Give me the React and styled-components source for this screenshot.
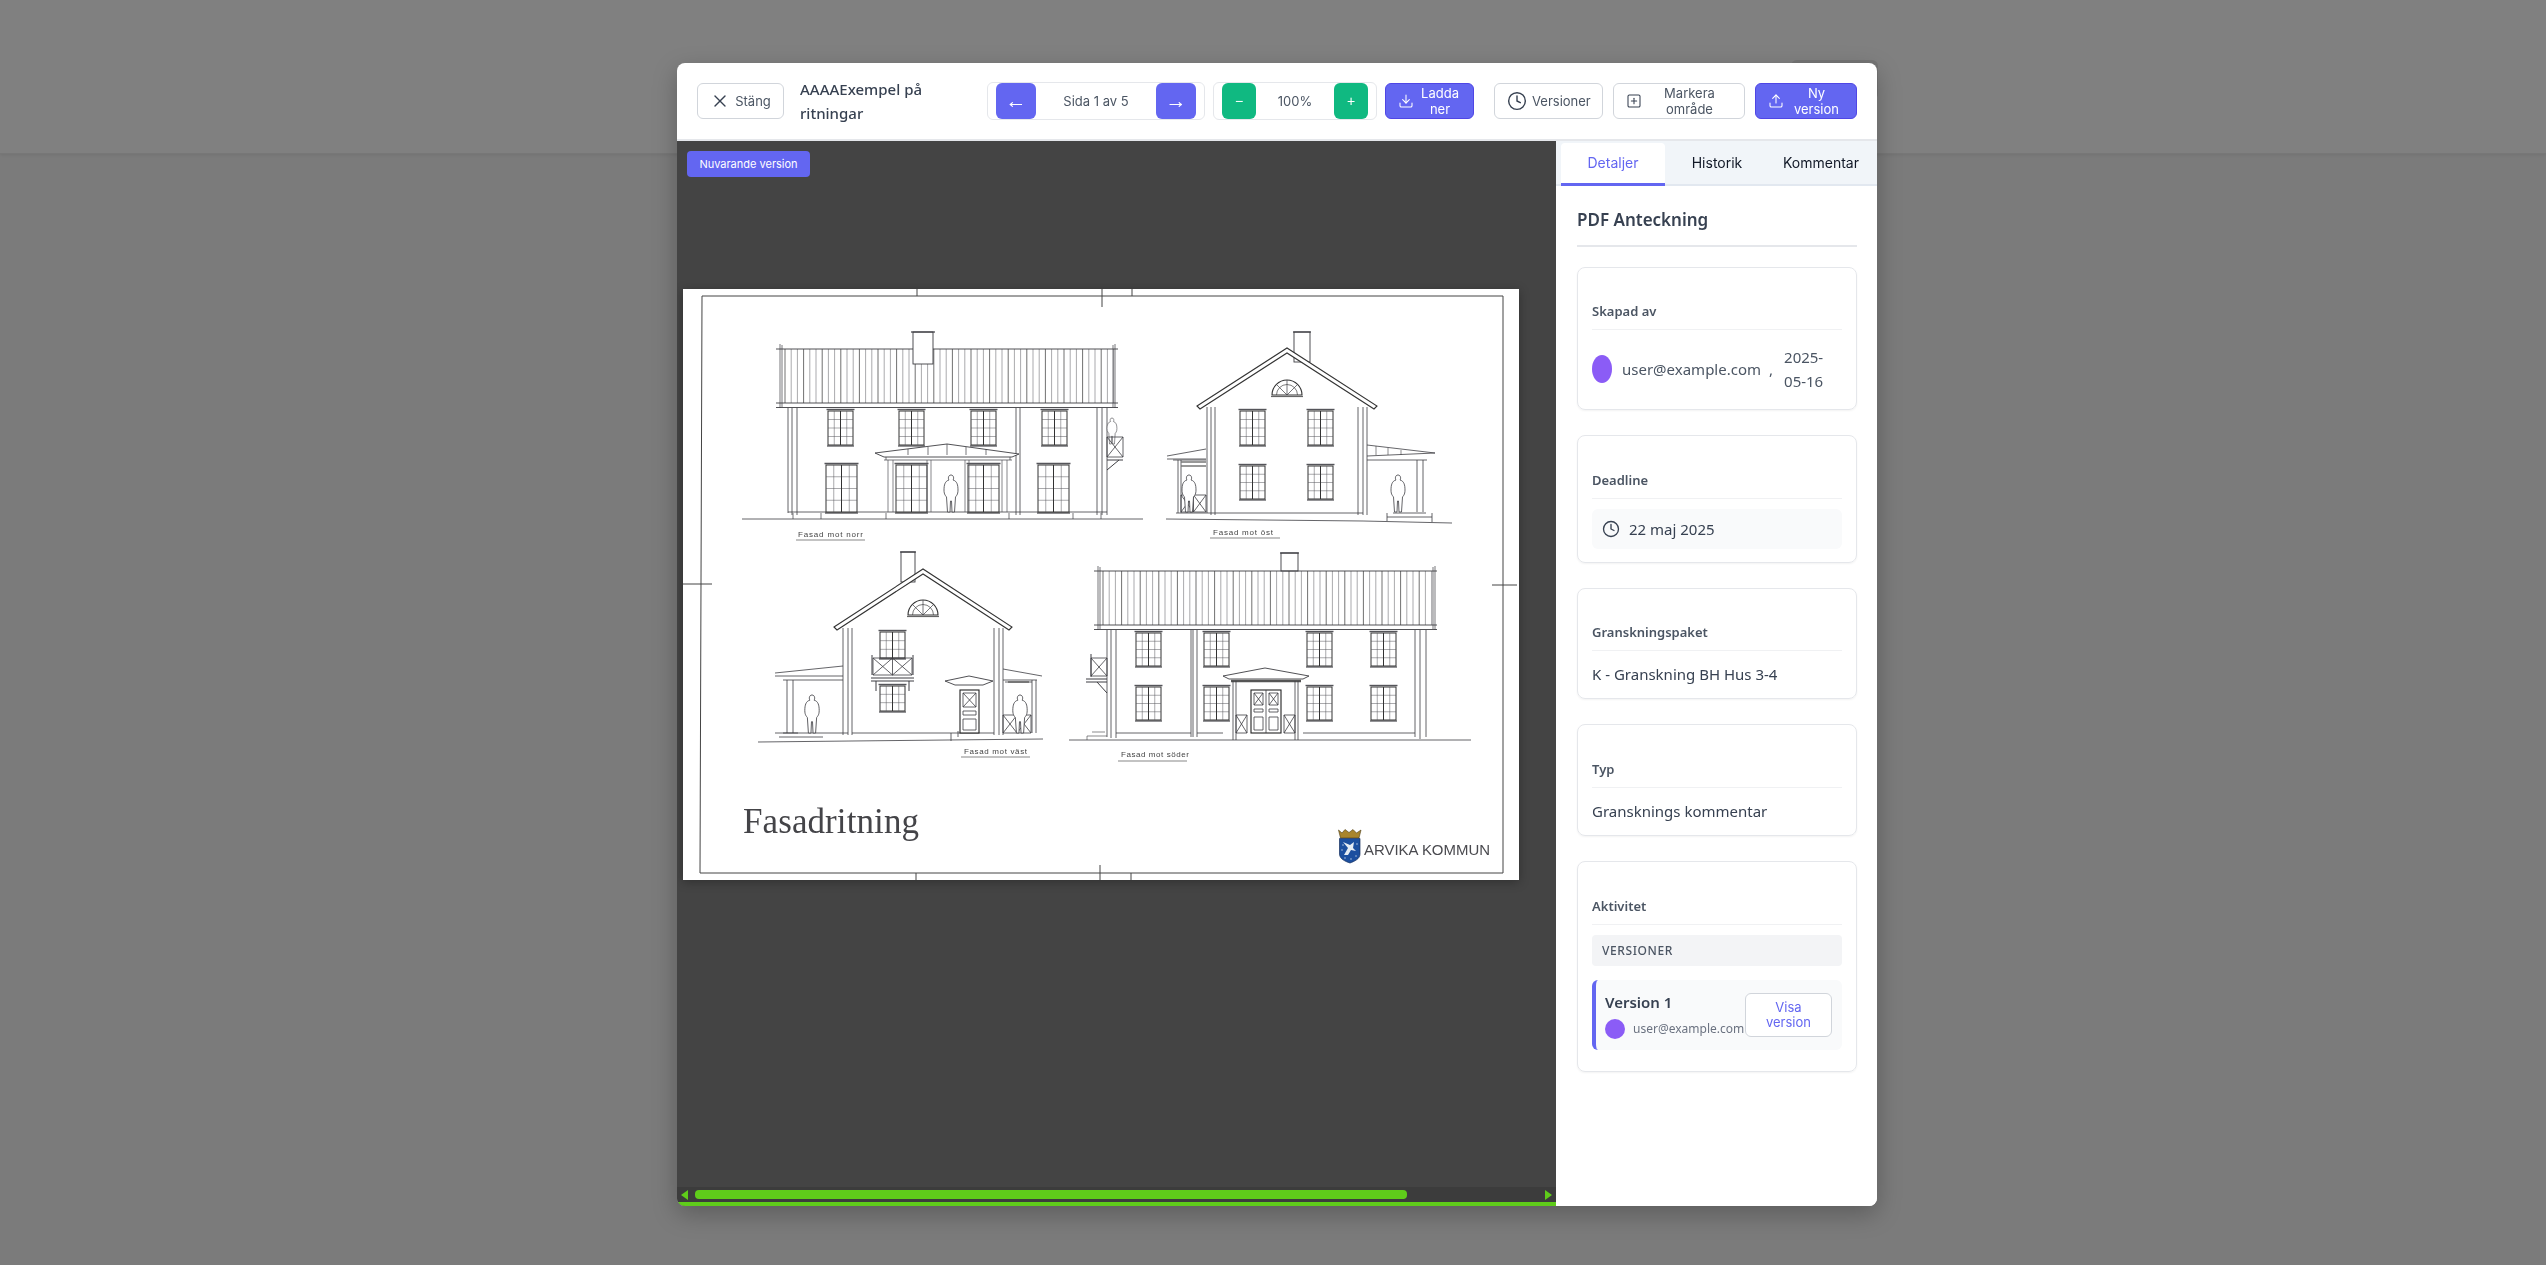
import React from 'react';
import styled, { createGlobalStyle } from 'styled-components';
import { X, Download, Clock, SquarePlus, Upload } from 'lucide-react';

const GlobalStyle = createGlobalStyle`
    html, body {
        margin: 0;
        height: 100%;
        background: #808080;
        overflow: hidden;
        font-family: "Inter", "Liberation Sans", sans-serif;
    }
`;

const PageBehind = styled.div`
    height: 1265px;
    display: flex;
    flex-direction: column;
    background: #7b7b7b;
`;

const TopBehind = styled.div`
    height: 154px;
    flex-shrink: 0;
    padding: 60px 0 0 1791px;
    box-sizing: border-box;
    background: #808080;
    border-bottom: 1px solid #777;
    box-shadow: 0 1px 3px rgba(0, 0, 0, 0.08);
`;

const GhostButton = styled.div`
    width: 87px;
    height: 40px;
    border-radius: 6px;
    background: #757575;
`;

const Modal = styled.div`
    position: fixed;
    top: 63px;
    left: 677px;
    width: 1200px;
    height: 1143px;
    display: flex;
    flex-direction: column;
    background: #fff;
    border-radius: 8px;
    overflow: hidden;
    box-shadow: 0 8px 24px rgba(0, 0, 0, 0.25);
`;

const Toolbar = styled.header`
    height: 76px;
    flex-shrink: 0;
    display: flex;
    align-items: center;
    padding: 0 20px;
    border-bottom: 2px solid #e5e7eb;
`;

const Button = styled.button`
    width: ${(p) => p.$w}px;
    height: 36px;
    flex-shrink: 0;
    margin-left: ${(p) => p.$ml || 0}px;
    display: flex;
    align-items: center;
    gap: 5px;
    padding: 0 12px;
    box-sizing: border-box;
    border-radius: 6px;
    border: 1px solid ${(p) => (p.$primary ? '#4f46e5' : '#d1d5db')};
    background: ${(p) => (p.$primary ? '#6366f1' : '#fff')};
    color: ${(p) => (p.$primary ? '#fff' : '#4b5563')};
    font: 13px/16px "Inter", sans-serif;
    text-align: center;

    svg {
        flex-shrink: 0;
        color: ${(p) => (p.$primary ? '#fff' : '#374151')};
    }

    span {
        flex: 1;
    }
`;

const Title = styled.div`
    width: 176px;
    margin-left: 16px;
    flex-shrink: 0;
    box-sizing: border-box;
    font: 500 15px/24px "Noto Sans", sans-serif;
    color: #374151;
`;

const ControlGroup = styled.div`
    width: ${(p) => p.$w}px;
    height: 38px;
    margin-left: ${(p) => p.$ml}px;
    flex-shrink: 0;
    display: flex;
    align-items: center;
    justify-content: space-between;
    padding: 0 8px;
    box-sizing: border-box;
    border: 1px solid #e5e7eb;
    border-radius: 6px;
    font-size: 13px;
    color: #4b5563;
`;

const SquareButton = styled.button`
    width: ${(p) => p.$w}px;
    height: 36px;
    padding: 0;
    border: none;
    border-radius: 6px;
    background: ${(p) => p.$bg};
    color: #fff;
    font: ${(p) => p.$fs}px/36px "Liberation Sans", sans-serif;
`;

const Body = styled.div`
    flex: 1;
    min-height: 0;
    display: flex;
`;

const Viewer = styled.main`
    position: relative;
    width: 879px;
    flex-shrink: 0;
    display: flex;
    flex-direction: column;
    background: #444;
`;

const Badge = styled.div`
    position: absolute;
    top: 10px;
    left: 10px;
    height: 26px;
    width: 123px;
    border-radius: 4px;
    background: #6366f1;
    color: #fff;
    font: 11px/26px "Inter", sans-serif;
    text-align: center;
`;

const Stage = styled.div`
    flex: 1;
    padding: 148px 0 0 6px;
`;

const Sheet = styled.div`
    width: 836px;
    height: 591px;
    background: #fff;
    box-shadow: 0 2px 10px rgba(0, 0, 0, 0.3);

    svg {
        display: block;
        filter: blur(0.3px);
    }
`;

const ScrollTrack = styled.div`
    height: 15px;
    flex-shrink: 0;
    display: flex;
    align-items: center;
    padding: 0 4px;
    background: #3c3c3c;
`;

const ScrollArrow = styled.div`
    width: 0;
    height: 0;
    border-top: 5px solid transparent;
    border-bottom: 5px solid transparent;
    border-${(p) => (p.$right ? 'left' : 'right')}: 7px solid #5fcc1a;
    margin-left: ${(p) => (p.$right ? 'auto' : '0')};
`;

const ScrollThumb = styled.div`
    width: 712px;
    height: 9px;
    margin-left: 7px;
    border-radius: 4px;
    background: #5fcc1a;
`;

const GreenEdge = styled.div`
    height: 4px;
    flex-shrink: 0;
    background: #5fcc1a;
`;

const Sidebar = styled.aside`
    flex: 1;
    min-width: 0;
    display: flex;
    flex-direction: column;
    background: #fff;
`;

const TabBar = styled.nav`
    height: 45px;
    flex-shrink: 0;
    display: flex;
    padding: 2px 0 0 5px;
    box-sizing: border-box;
    background: #f1f5f9;
    border-bottom: 2px solid #e2e8f0;
`;

const Tab = styled.div`
    width: 104px;
    height: 43px;
    padding-bottom: 3px;
    box-sizing: border-box;
    border-radius: 4px 4px 0 0;
    background: ${(p) => (p.$active ? '#fff' : 'transparent')};
    border-bottom: 3px solid ${(p) => (p.$active ? '#6366f1' : 'transparent')};
    color: ${(p) => (p.$active ? '#6366f1' : '#111827')};
    font: 14px/40px "Inter", sans-serif;
    text-align: center;
`;

const Details = styled.div`
    padding: 0 20px 0 21px;
    display: flex;
    flex-direction: column;
    font-family: "Noto Sans", sans-serif;
`;

const Heading = styled.h2`
    margin: 21px 0 20px;
    padding-bottom: 12px;
    border-bottom: 2px solid #e5e7eb;
    font: 600 17px/26px "Noto Sans", sans-serif;
    color: #374151;
`;

const Card = styled.section`
    margin-bottom: 25px;
    padding: ${(p) => p.$pt || 33}px 14px ${(p) => p.$pb || 12}px;
    border: 1px solid #e5e7eb;
    border-radius: 8px;
    box-shadow: 0 1px 2px rgba(0, 0, 0, 0.05);
`;

const Label = styled.h3`
    margin: 0 0 10px;
    padding-bottom: 8px;
    border-bottom: 1px solid #f0f1f3;
    font: 600 13px/20px "Noto Sans", sans-serif;
    color: #4b5563;
`;

const Value = styled.div`
    margin-top: 11px;
    font-size: 15px;
    line-height: 24px;
    color: #374151;
`;

const UserRow = styled.div`
    display: flex;
    align-items: center;
    margin-top: 15px;
    font-size: 15px;
    line-height: 24px;
    color: #4b5563;
`;

const Avatar = styled.div`
    width: 20px;
    height: ${(p) => p.$h || 20}px;
    flex-shrink: 0;
    border-radius: 50%;
    background: #8b5cf6;
    margin-right: ${(p) => p.$mr}px;
`;

const Comma = styled.span`
    margin: 0 11px 0 8px;
`;

const DateText = styled.span`
    width: 50px;
`;

const DeadlineBox = styled.div`
    height: 40px;
    display: flex;
    align-items: center;
    gap: 9px;
    padding: 0 10px;
    border-radius: 6px;
    background: #f9fafb;
    font-size: 15px;
    color: #374151;

    svg {
        color: #374151;
    }
`;

const SectionTag = styled.div`
    height: 31px;
    padding-left: 10px;
    border-radius: 4px;
    background: #f3f4f6;
    font: 500 12px/31px "Noto Sans", sans-serif;
    letter-spacing: 0.6px;
    color: #4b5563;
`;

const VersionItem = styled.div`
    height: 70px;
    margin: 14px 0 9px;
    display: flex;
    align-items: center;
    justify-content: space-between;
    padding: 0 10px 0 9px;
    box-sizing: border-box;
    border-left: 4px solid #6366f1;
    border-radius: 6px;
    background: #f9fafb;
`;

const VersionInfo = styled.div`
    min-width: 0;
    width: 140px;
    flex-shrink: 0;
`;

const VersionName = styled.div`
    font: 600 15px/22px "Noto Sans", sans-serif;
    color: #374151;
`;

const VersionUser = styled.div`
    display: flex;
    align-items: center;
    margin-top: 6px;
    font-size: 12px;
    line-height: 20px;
    color: #6b7280;
`;

const ViewButton = styled.button`
    width: 87px;
    height: 44px;
    flex-shrink: 0;
    padding: 0 12px;
    border: 1px solid #d1d5db;
    border-radius: 6px;
    background: #fff;
    color: #6366f1;
    font: 13px/15px "Inter", sans-serif;
`;

const INK = '#3d3d42';

const Line = ({ d, w = 0.8, c = INK }) => <path d={d} fill="none" stroke={c} strokeWidth={w} />;

const Win = ({ x, y, w, h, cols = 4, rows = 4 }) => {
    const grid = [];
    for (let i = 1; i < cols; i++) {
        const gx = x + (w * i) / cols;
        grid.push(`M${gx} ${y}V${y + h}`);
    }
    for (let i = 1; i < rows; i++) {
        const gy = y + (h * i) / rows;
        grid.push(`M${x} ${gy}H${x + w}`);
    }
    return (
        <g>
            <Line d={`M${x - 1.5} ${y - 1.5}H${x + w + 1.5}`} w={1.4} c="#55555a" />
            <Line d={`M${x - 1} ${y + h + 1}H${x + w + 1}`} w={1.4} c="#66666a" />
            <rect x={x} y={y} width={w} height={h} fill="#fff" stroke="#333" strokeWidth={1} />
            <Line d={grid.join('')} w={0.5} c="#55555a" />
            <Line d={`M${x + w / 2} ${y}V${y + h}`} w={1} c="#333" />
        </g>
    );
};

const Person = ({ x, y, h }) => (
    <g transform={`translate(${x} ${y}) scale(${h / 37})`}>
        <path
            d="M0 0C-3 0-3 4-2 5C-6 6-7 10-7 15C-7 20-5 21-4.5 22L-3.5 37L-1 37L-.5 26L.5 26L1 37L3.5 37L4.5 22C5 21 7 20 7 15C7 10 6 6 2 5C3 4 3 0 0 0Z"
            fill="#fff"
            stroke={INK}
            strokeWidth={0.8}
        />
    </g>
);

const Rail = ({ x, y, w, h, n = 1 }) => {
    const cell = w / n;
    let d = `M${x} ${y}H${x + w}M${x} ${y + h}H${x + w}`;
    for (let i = 0; i < n; i++) {
        const a = x + cell * i;
        d += `M${a} ${y}L${a + cell} ${y + h}M${a + cell} ${y}L${a} ${y + h}M${a} ${y}V${y + h}`;
    }
    d += `M${x + w} ${y}V${y + h}`;
    return <Line d={d} w={0.8} />;
};

const Roof = ({ x1, x2, top, bottom, left, right }) => {
    const stripes = [];
    for (let x = x1 + 5, i = 0; x < x2; x += 6.2, i++) {
        stripes.push(<Line key={x} d={`M${x} ${top}V${bottom}`} w={0.7} c={i % 3 === 0 ? '#333' : '#85858a'} />);
    }
    return (
        <g>
            {stripes}
            <Line d={`M${left} ${top}H${right}`} w={0.9} />
            <Line d={`M${x1} ${top - 5}V${bottom + 5}M${x1 + 2} ${top - 4}V${bottom + 4}M${x2} ${top - 5}V${bottom + 5}M${x2 - 2} ${top - 4}V${bottom + 4}`} w={0.7} />
            <Line d={`M${left} ${bottom}H${right}M${left} ${bottom + 4.5}H${right}`} w={0.9} />
        </g>
    );
};

const Gable = ({ ax, ay, lx, rx, ey }) => (
    <g>
        <path d={`M${lx} ${ey}L${ax} ${ay}L${rx} ${ey}L${rx - 3} ${ey + 3}L${ax} ${ay + 5}L${lx + 3} ${ey + 3}Z`} fill="#fff" stroke="#333" strokeWidth={1.1} />
    </g>
);

const Lunette = ({ x, y, r }) => (
    <g>
        <path d={`M${x - r} ${y}A${r} ${r} 0 0 1 ${x + r} ${y}Z`} fill="#fff" stroke="#333" strokeWidth={1.1} />
        <path d={`M${x - r * 0.7} ${y}A${r * 0.7} ${r * 0.7} 0 0 1 ${x + r * 0.7} ${y}`} fill="none" stroke="#444" strokeWidth={0.7} />
        <Line d={`M${x} ${y}V${y - r}M${x} ${y}L${x - r * 0.7} ${y - r * 0.7}M${x} ${y}L${x + r * 0.7} ${y - r * 0.7}`} w={0.7} />
        <Line d={`M${x - r - 1} ${y + 1.5}H${x + r + 1}`} w={1.2} c="#666" />
    </g>
);

const Caption = ({ x, y, text, ux1, ux2, uy, len }) => (
    <g>
        <text x={x} y={y} fontFamily="Liberation Sans, sans-serif" fontSize="8" fill="#444" textLength={len}>
            {text}
        </text>
        <Line d={`M${ux1} ${uy}H${ux2}`} w={0.7} c="#555" />
    </g>
);

const NorthFacade = () => (
    <g>
        <Roof x1={97} x2={432} top={60} bottom={114} left={93} right={435} />
        <rect x={230} y={43} width={20} height={32} fill="#fff" stroke={INK} strokeWidth={0.9} />
        <Line d="M228 43H252" w={1.2} />
        <Line d="M105 119V224M109 119V226M114 119V226M414 119V226M419 119V226M424 119V226M333 119V226M337 119V226" />
        <Line d="M59 230H460M105 223H424" />
        <Line d="M110 224V230M138 224V230M203 224V230M326 224V230M390 224V230M418 224V230" w={0.7} />
        {[145, 216, 288, 359].map((x) => (
            <Win key={x} x={x} y={122} w={25} h={34} />
        ))}
        {[143, 213, 285, 355].map((x) => (
            <Win key={x} x={x} y={176} w={31} h={47} />
        ))}
        <path d="M192 164L264 155L336 165L329 168H201Z" fill="#fff" stroke={INK} strokeWidth={0.9} />
        <Line d="M201 171H329M203 168V171M327 168V171M225 160V166M245 158V166M264 155V166M283 158V166M303 160V166" w={0.7} />
        <Line d="M205 171V223M210 171V223M244 171V223M248 171V223M282 171V223M286 171V223M319 171V223M324 171V223" w={0.7} c="#55555a" />
        <Person x={268} y={186} h={37} />
        <Person x={429} y={129} h={26} />
        <Rail x={424} y={148} w={16} h={20} />
        <Line d="M424 171H440M424 181L436 171" w={1} />
        <Caption x={115} y={248} text="Fasad mot norr" len={65} ux1={113} ux2={182} uy={251} />
    </g>
);

const EastFacade = () => (
    <g>
        <rect x={611} y={43} width={16} height={30} fill="#fff" stroke={INK} strokeWidth={0.9} />
        <Line d="M610 43H628" w={1.2} />
        <Gable ax={604} ay={59} lx={514} rx={694} ey={117} />
        <Line d="M524 118V224M528 118V226M532 118V226M675 118V226M680 118V226M684 118V226" />
        <Line d="M493 224H680M483 230L680 232L769 234" />
        <Lunette x={604} y={106} r={15} />
        {[557, 625].map((x) => (
            <g key={x}>
                <Win x={x} y={122} w={25} h={34} />
                <Win x={x} y={177} w={25} h={33} />
            </g>
        ))}
        <Line d="M484 167L523 160M484 170H523M490 171H523M495 171V224M498 171V224" w={0.8} />
        <Line d="M498 173H523M498 177H523" w={1.4} c="#777" />
        <Rail x={498} y={206} w={25} h={17} n={2} />
        <Person x={506} y={186} h={37} />
        <Line d="M684 156L752 164L684 167M684 171H744M734 171V223M740 171V223M704 224V232M704 228H749M749 224V233M710 224H743" w={0.8} />
        <Line d="M693 157V166M705 159V166M718 161V166" w={0.6} />
        <Person x={715} y={186} h={37} />
        <Caption x={530} y={246} text="Fasad mot öst" len={60} ux1={527} ux2={597} uy={249} />
    </g>
);

const WestFacade = () => (
    <g>
        <rect x={218} y={263} width={14} height={30} fill="#fff" stroke={INK} strokeWidth={0.9} />
        <Line d="M217 263H233" w={1.2} />
        <Gable ax={240} ay={280} lx={151} rx={329} ey={338} />
        <Line d="M160 339V446M165 339V446M169 339V446M311 339V446M316 339V446M320 339V446" />
        <Line d="M169 444H311M75 453L168 452L360 450M92 444H165" />
        <Lunette x={240} y={326} r={15} />
        <Win x={197} y={343} w={25} h={26} rows={3} />
        <Rail x={190} y={369} w={39} h={17} n={2} />
        <Line d="M188 389H231M188 392H231M189 366V386M230 366V386M193 392V402M226 392V402" w={1} />
        <Win x={197} y={397} w={25} h={25} rows={3} />
        <path d="M262 392L286 387L310 392L300 396H272Z" fill="#fff" stroke={INK} strokeWidth={0.9} />
        <rect x={277} y={401} width={19} height={43} fill="#fff" stroke="#222" strokeWidth={1.1} />
        <Line d="M280 404H293V418H280ZM280 404L293 418M293 404L280 418M280 422H293V426H280ZM280 430H293V441H280Z" w={0.8} />
        <Line d="M268 444V452M275 442V448" w={0.8} />
        <Line d="M92 384L160 377M92 387H160M100 391H160M104 391V444M110 391V444M100 444H115M96 448H140" w={0.8} />
        <Person x={129} y={406} h={38} />
        <Line d="M320 380L359 387M320 391H354M349 391V444M353 391V444M322 393H349" w={0.8} />
        <Line d="M325 393H346" w={2} c="#777" />
        <Rail x={320} y={426} w={28} h={18} n={2} />
        <Person x={337} y={406} h={38} />
        <Caption x={281} y={465} text="Fasad mot väst" len={63} ux1={278} ux2={347} uy={468} />
    </g>
);

const SouthFacade = () => (
    <g>
        <rect x={598} y={264} width={17} height={18} fill="#fff" stroke={INK} strokeWidth={0.9} />
        <Line d="M597 264H616" w={1.2} />
        <Roof x1={415} x2={752} top={282} bottom={336} left={411} right={754} />
        <Line d="M424 341V448M428 341V449M433 341V449M508 341V448M510 341V448M514 341V448M732 341V448M737 341V450M743 341V448" />
        <Line d="M386 451H788M433 444H508M514 444H540M620 444H732" />
        <Line d="M404 447H424M404 447V451M409 443H422" w={0.6} />
        {[453, 521, 624, 688].map((x) => (
            <g key={x}>
                <Win x={x} y={344} w={25} h={33} />
                <Win x={x} y={398} w={25} h={33} />
            </g>
        ))}
        <path d="M540 387L582 379L626 387L620 390H546Z" fill="#fff" stroke={INK} strokeWidth={0.9} />
        <Line d="M548 392H618" w={2.4} c="#555" />
        <Line d="M550 392V451M553 392V451M612 392V451M615 392V451" w={0.8} />
        <rect x={568} y={401} width={30} height={43} fill="#fff" stroke="#222" strokeWidth={1.1} />
        <Line d="M583 401V444M571 404H580V416H571ZM571 404L580 416M580 404L571 416M586 404H595V416H586ZM586 404L595 416M595 404L586 416M571 420H580V423H571ZM586 420H595V423H586ZM571 428H580V441H571ZM586 428H595V441H586Z" w={0.8} />
        <Rail x={553} y={426} w={11} h={18} />
        <Rail x={601} y={426} w={11} h={18} />
        <Rail x={408} y={369} w={16} h={18} />
        <Line d="M408 365V388M403 390H424M403 393H424M414 393L424 404" w={1} />
        <Caption x={438} y={468} text="Fasad mot söder" len={68} ux1={435} ux2={504} uy={472} />
    </g>
);

const Logo = () => (
    <g>
        <path d="M655.5 541L659 544L662 540.5L666 543.5L670 540.5L673.5 544L678 541L676 549H657.5Z" fill="#a9852d" stroke="#4d3c12" strokeWidth={0.6} />
        <path d="M656.5 549.5H677V565C677 570 671 572.5 667 574C662.5 572.5 656.5 570 656.5 565Z" fill="#1c4f9f" stroke="#17305f" strokeWidth={0.7} />
        <path d="M661 566L665 559L660 553L667 556L671 553L670 559L673 562L668 561L665 566Z" fill="#e6ecf3" />
        {[[659, 561], [674, 555], [673, 567], [668, 570], [660, 556], [662, 569]].map(([cx, cy]) => (
            <circle key={`${cx}-${cy}`} cx={cx} cy={cy} r={0.7} fill="#c9d7ea" />
        ))}
        <text x={681} y={566} fontFamily="Liberation Sans, sans-serif" fontSize="15" fill="#4a4a4f" textLength={126} lengthAdjust="spacingAndGlyphs">
            ARVIKA KOMMUN
        </text>
    </g>
);

const Drawing = () => (
    <svg width="836" height="591" viewBox="0 0 836 591">
        <Line d="M19 7H820V584H17ZM234 0V7M419 0V18M449 0V7M233 584V591M417 576V591M448 584V591M0 295H29M809 296H834" w={1} c="#444" />
        <NorthFacade />
        <EastFacade />
        <WestFacade />
        <SouthFacade />
        <text x={60} y={544} fontFamily="Liberation Serif, serif" fontSize="35" fill="#444448" textLength={176}>
            Fasadritning
        </text>
        <Logo />
    </svg>
);

const App = () => {
    return (
        <>
            <GlobalStyle />
            <PageBehind>
                <TopBehind>
                    <GhostButton />
                </TopBehind>
            </PageBehind>
            <Modal>
                <Toolbar>
                    <Button $w={87}>
                        <X size={20} strokeWidth={1.6} />
                        <span>Stäng</span>
                    </Button>
                    <Title>AAAAExempel på ritningar</Title>
                    <ControlGroup $w={218} $ml={11}>
                        <SquareButton $w={40} $fs={21} $bg="#6366f1">←</SquareButton>
                        Sida 1 av 5
                        <SquareButton $w={40} $fs={21} $bg="#6366f1">→</SquareButton>
                    </ControlGroup>
                    <ControlGroup $w={164} $ml={8}>
                        <SquareButton $w={34} $fs={14} $bg="#10b981">−</SquareButton>
                        100%
                        <SquareButton $w={34} $fs={14} $bg="#10b981">+</SquareButton>
                    </ControlGroup>
                    <Button $w={89} $ml={8} $primary>
                        <Download size={16} strokeWidth={1.6} />
                        <span>Ladda ner</span>
                    </Button>
                    <Button $w={109} $ml={20}>
                        <Clock size={20} strokeWidth={1.7} />
                        <span>Versioner</span>
                    </Button>
                    <Button $w={132} $ml={10}>
                        <SquarePlus size={16} strokeWidth={1.6} />
                        <span>Markera område</span>
                    </Button>
                    <Button $w={102} $ml={10} $primary>
                        <Upload size={16} strokeWidth={1.6} />
                        <span>Ny version</span>
                    </Button>
                </Toolbar>
                <Body>
                    <Viewer>
                        <Badge>Nuvarande version</Badge>
                        <Stage>
                            <Sheet>
                                <Drawing />
                            </Sheet>
                        </Stage>
                        <ScrollTrack>
                            <ScrollArrow />
                            <ScrollThumb />
                            <ScrollArrow $right />
                        </ScrollTrack>
                        <GreenEdge />
                    </Viewer>
                    <Sidebar>
                        <TabBar>
                            <Tab $active>Detaljer</Tab>
                            <Tab>Historik</Tab>
                            <Tab>Kommentar</Tab>
                        </TabBar>
                        <Details>
                            <Heading>PDF Anteckning</Heading>
                            <Card $pb={16}>
                                <Label>Skapad av</Label>
                                <UserRow>
                                    <Avatar $h={28} $mr={10} />
                                    user@example.com
                                    <Comma>,</Comma>
                                    <DateText>2025-05-16</DateText>
                                </UserRow>
                            </Card>
                            <Card $pt={34} $pb={13}>
                                <Label>Deadline</Label>
                                <DeadlineBox>
                                    <Clock size={18} strokeWidth={1.8} />
                                    22 maj 2025
                                </DeadlineBox>
                            </Card>
                            <Card>
                                <Label>Granskningspaket</Label>
                                <Value>K - Granskning BH Hus 3-4</Value>
                            </Card>
                            <Card $pt={34}>
                                <Label>Typ</Label>
                                <Value>Gransknings kommentar</Value>
                            </Card>
                            <Card $pt={34}>
                                <Label>Aktivitet</Label>
                                <SectionTag>VERSIONER</SectionTag>
                                <VersionItem>
                                    <VersionInfo>
                                        <VersionName>Version 1</VersionName>
                                        <VersionUser>
                                            <Avatar $mr={8} />
                                            user@example.com
                                        </VersionUser>
                                    </VersionInfo>
                                    <ViewButton>Visa version</ViewButton>
                                </VersionItem>
                            </Card>
                        </Details>
                    </Sidebar>
                </Body>
            </Modal>
        </>
    );
};

export default App;
